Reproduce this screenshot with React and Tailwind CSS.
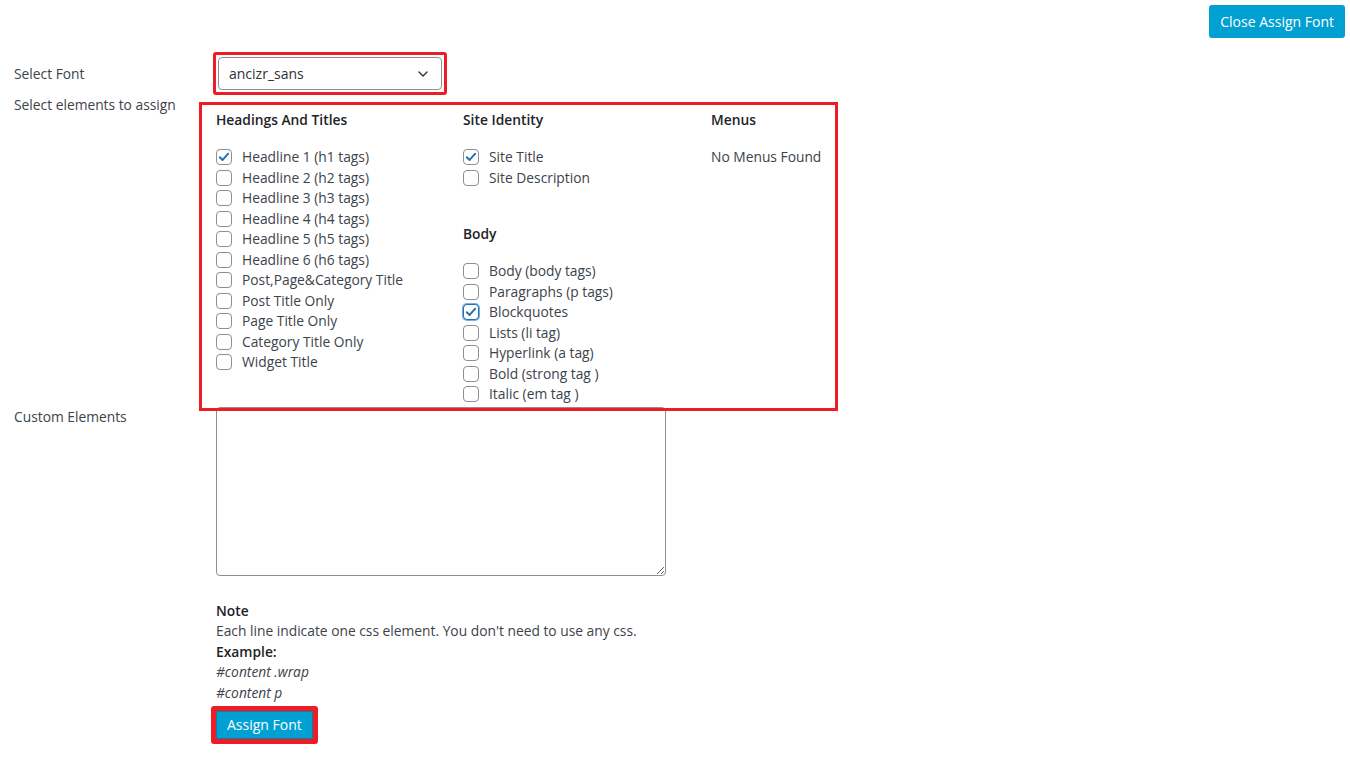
import React from 'react';
import { ChevronDown } from 'lucide-react';

const headings = [
  ['Headline 1 (h1 tags)', true],
  ['Headline 2 (h2 tags)'],
  ['Headline 3 (h3 tags)'],
  ['Headline 4 (h4 tags)'],
  ['Headline 5 (h5 tags)'],
  ['Headline 6 (h6 tags)'],
  ['Post,Page&Category Title'],
  ['Post Title Only'],
  ['Page Title Only'],
  ['Category Title Only'],
  ['Widget Title'],
];

const identity = [['Site Title', true], ['Site Description']];

const body = [
  ['Body (body tags)'],
  ['Paragraphs (p tags)'],
  ['Blockquotes', true, true],
  ['Lists (li tag)'],
  ['Hyperlink (a tag)'],
  ['Bold (strong tag )'],
  ['Italic (em tag )'],
];

function Check({ label, checked, focus }) {
  return (
    <label className="flex items-center h-[20.5px]">
      <span
        className={`w-4 h-4 mr-[10px] rounded-[4px] bg-white flex items-center justify-center shrink-0 ${
          focus ? 'border-[1.5px] border-[#2271b1] shadow-[0_0_0_1px_#72aee6]' : 'border border-[#8c8f94]'
        }`}
      >
        {checked && (
          <svg viewBox="0 0 16 16" className="w-[14px] h-[14px]">
            <path d="M3.2 8.3 L6.4 11.4 L12.8 4.2" fill="none" stroke="#2271b1" strokeWidth="2.2" strokeLinecap="round" strokeLinejoin="round" />
          </svg>
        )}
      </span>
      <span>{label}</span>
    </label>
  );
}

function Group({ title, items, className = '' }) {
  return (
    <div className={className}>
      <h3 className="font-semibold text-[#1d2327] h-5 mb-[17px]">{title}</h3>
      {items.map(([l, c, f]) => (
        <Check key={l} label={l} checked={c} focus={f} />
      ))}
    </div>
  );
}

export default function App() {
  return (
    <div
      className="min-h-screen bg-white text-[#3c434a] text-[13.8px] leading-5 pl-[14px]"
      style={{ fontFamily: '"Open Sans", "Noto Sans", Arial, sans-serif' }}
    >
      <div className="flex justify-end pt-[5px] pr-[5px]">
        <button className="h-[33px] px-[11px] rounded-[3px] bg-[#00a0d2] text-white text-[14px]">Close Assign Font</button>
      </div>

      {/* select font */}
      <div className="flex items-center mt-[14px]">
        <div className="w-[199px]">Select Font</div>
        <div className="border-[3px] border-[#ee1c25] rounded-[3px] p-[2px]">
          <div className="w-[224px] h-[33px] border border-[#8c8f94] rounded-[4px] flex items-center justify-between pl-[10px] pr-[10px] text-[14px] text-[#2c3338]">
            <span>ancizr_sans</span>
            <ChevronDown size={16} strokeWidth={2} className="text-[#2c3338]" />
          </div>
        </div>
      </div>

      {/* elements */}
      <div className="flex">
        <div className="w-[185px] whitespace-nowrap">Select elements to assign</div>
        <div className="relative z-10 mt-[7px] mb-[-4px] w-[639px] border-[3px] border-[#ee1c25] pt-[5px] pb-[3px] pl-[14px] flex">
          <Group title="Headings And Titles" items={headings} className="w-[247px]" />
          <div className="w-[248px]">
            <Group title="Site Identity" items={identity} />
            <Group title="Body" items={body} className="mt-[36px]" />
          </div>
          <div>
            <h3 className="font-semibold text-[#1d2327] h-5 mb-[17px]">Menus</h3>
            <div className="h-[20.5px] flex items-center">No Menus Found</div>
          </div>
        </div>
      </div>

      {/* custom */}
      <div className="flex">
        <div className="w-[202px]">Custom Elements</div>
        <div>
          <textarea className="block w-[450px] h-[169px] border border-[#8c8f94] rounded-[4px] resize-y bg-white" />
          <div className="mt-[25px] leading-[20.5px]">
            <div className="font-semibold text-[#1d2327]">Note</div>
            <div>Each line indicate one css element. You don't need to use any css.</div>
            <div className="font-semibold text-[#1d2327]">Example:</div>
            <div className="italic">#content .wrap</div>
            <div className="italic">#content p</div>
          </div>
          <div className="inline-block mt-[3px] ml-[-5px] bg-[#ee1c25] p-[5px] rounded-[3px]">
            <button className="block h-[28px] px-[10px] bg-[#00a0d2] border border-[#0a7fa6] text-white text-[14px]">Assign Font</button>
          </div>
        </div>
      </div>
    </div>
  );
}
